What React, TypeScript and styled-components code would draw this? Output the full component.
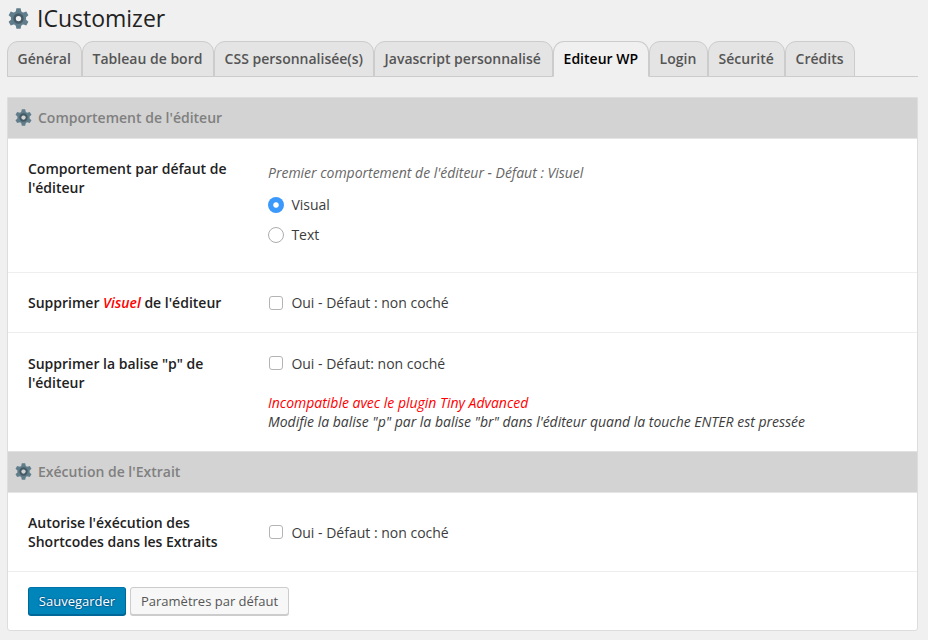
import React from "react";
import styled, { createGlobalStyle, css } from "styled-components";

const GlobalStyle = createGlobalStyle`
  *, *::before, *::after { box-sizing: border-box; }
  html, body { margin: 0; padding: 0; }
  body {
    background: #f0f0f0;
    color: #3c3c3c;
    font-family: "Open Sans", sans-serif;
    font-size: 14px;
    line-height: 19px;
    overflow: hidden;
  }
`;

const Page = styled.main`
  width: 928px;
  height: 640px;
  padding: 0 10px 0 7px;
  background: #f0f0f0;
`;

const Title = styled.h1`
  display: flex;
  align-items: center;
  gap: 8px;
  height: 41px;
  margin: 0;
  padding: 0 0 5px 1px;
  color: #222;
  font-size: 23px;
  font-weight: 400;
  line-height: 29px;
`;

const Tabs = styled.nav`
  display: flex;
  height: 36px;
  border-bottom: 1px solid #ccc;
`;

const Tab = styled.a<{ $width: number; $active?: boolean }>`
  width: ${(p) => p.$width}px;
  height: 36px;
  padding: 7px 0 0 9.6px;
  border: 1px solid #ccc;
  border-radius: 11px 11px 0 0;
  background: #e4e4e4;
  color: #555;
  font-size: 14px;
  font-weight: 600;
  line-height: 19px;
  white-space: nowrap;
  ${(p) =>
    p.$active &&
    css`
      border-bottom-color: #f0f0f0;
      background: #f0f0f0;
      color: #000;
    `}
`;

const Panel = styled.form`
  margin: 20px 0 0;
  border: 1px solid #ddd;
  border-radius: 0 0 3px 3px;
  background: #fff;
`;

const SectionHeader = styled.h2<{ $ruled?: boolean }>`
  display: flex;
  align-items: center;
  gap: 6px;
  height: ${(p) => (p.$ruled ? 42 : 41)}px;
  margin: 0;
  padding: 0 7px 1px;
  border-top: ${(p) => (p.$ruled ? "1px solid #e1e1e1" : "0")};
  border-bottom: 1px solid #e5e5e5;
  background: #d3d3d3;
  color: #808080;
  font-size: 14px;
  font-weight: 600;
  line-height: 19px;
`;

const Row = styled.section<{ $height: number; $top?: number; $ruled?: boolean }>`
  display: grid;
  grid-template-columns: 240px 1fr;
  height: ${(p) => p.$height}px;
  padding: ${(p) => p.$top ?? 20}px 20px 0;
  border-bottom: ${(p) => (p.$ruled ? "1px solid #eee" : "0")};
`;

const Label = styled.h3`
  margin: 0;
  color: #222;
  font-size: 14px;
  font-weight: 600;
  line-height: 19px;
`;

const Warning = styled.em`
  color: #f00;
`;

const Field = styled.div<{ $top?: number }>`
  padding-top: ${(p) => p.$top ?? 0}px;
`;

const Hint = styled.p`
  margin: 0 0 13px;
  color: #666;
  font-style: italic;
  letter-spacing: -0.012px;
`;

const Note = styled.p`
  margin: 20px 0 0;
  font-style: italic;
  letter-spacing: -0.012px;
`;

const Choice = styled.label`
  display: flex;
  align-items: center;
  height: 19px;
  & + & { margin-top: 11px; }
`;

const Radio = styled.input`
  appearance: none;
  width: 16px;
  height: 16px;
  margin: 0 7.4px 0 0;
  border: 1px solid #adadad;
  border-radius: 50%;
  background: #fff;
  &:checked {
    border: 0;
    background: radial-gradient(circle, #fff 2.3px, #3b99fc 3.2px);
  }
`;

const Checkbox = styled.input<{ $low?: boolean }>`
  appearance: none;
  width: 14px;
  height: 14px;
  margin: ${(p) => (p.$low ? "1px 8.4px 0 1px" : "0 8.4px 1px 1px")};
  border: 1px solid #b4b4b4;
  border-radius: 3px;
  background: #fff;
`;

const Footer = styled.footer`
  display: flex;
  gap: 4px;
  height: 58px;
  padding: 15px 20px 0;
`;

const Button = styled.button<{ $primary?: boolean }>`
  width: ${(p) => (p.$primary ? 98 : 159)}px;
  height: 28px;
  padding: 0;
  border: 1px solid #ccc;
  border-radius: 3px;
  background: #f7f7f7;
  box-shadow: 0 1px 0 #ccc;
  color: #555;
  font-family: inherit;
  font-size: 13px;
  line-height: 26px;
  white-space: nowrap;
  ${(p) =>
    p.$primary &&
    css`
      border-color: #0073aa #006799 #006799;
      background: #0085ba;
      box-shadow: 0 1px 0 #006799;
      color: #fff;
      text-shadow: 0 -1px 1px #006799, 1px 0 1px #006799, 0 1px 1px #006799, -1px 0 1px #006799;
    `}
`;

const GearSvg = styled.svg`
  flex: none;
  display: block;
`;

const TEETH = [0, 60, 120, 180, 240, 300];

function Gear({ size, hole }: { size: number; hole: string }) {
  return (
    <GearSvg width={size} height={size} viewBox="0 0 20 20" aria-hidden="true">
      <g fill="#607d8b">
        {TEETH.map((angle) => (
          <path key={angle} d="M8 .3h4l.8 4.2H7.2z" transform={`rotate(${angle} 10 10)`} />
        ))}
        <circle cx="10" cy="10" r="7.2" />
      </g>
      <circle cx="10" cy="10" r="3.7" fill="none" stroke="#455a64" strokeWidth="2.4" />
      <circle cx="10" cy="10" r="2.5" fill={hole} />
    </GearSvg>
  );
}

const TABS = [
  { name: "Général", width: 75 },
  { name: "Tableau de bord", width: 132 },
  { name: "CSS personnalisée(s)", width: 160 },
  { name: "Javascript personnalisé", width: 179 },
  { name: "Editeur WP", width: 96, active: true },
  { name: "Login", width: 59 },
  { name: "Sécurité", width: 77 },
  { name: "Crédits", width: 70 },
];

export default function App() {
  return (
    <>
      <GlobalStyle />
      <Page>
        <Title>
          <Gear size={21} hole="#f0f0f0" />
          ICustomizer
        </Title>
        <Tabs>
          {TABS.map((tab) => (
            <Tab key={tab.name} $width={tab.width} $active={tab.active}>
              {tab.name}
            </Tab>
          ))}
        </Tabs>
        <Panel>
          <SectionHeader>
            <Gear size={17} hole="#d3d3d3" />
            Comportement de l'éditeur
          </SectionHeader>
          <Row $height={134} $ruled>
            <Label>
              Comportement par défaut de
              <br />
              l'éditeur
            </Label>
            <Field $top={4}>
              <Hint>Premier comportement de l'éditeur - Défaut : Visuel</Hint>
              <Choice>
                <Radio type="radio" name="mode" defaultChecked />
                Visual
              </Choice>
              <Choice>
                <Radio type="radio" name="mode" />
                Text
              </Choice>
            </Field>
          </Row>
          <Row $height={60} $ruled>
            <Label>
              Supprimer <Warning>Visuel</Warning> de l'éditeur
            </Label>
            <Field>
              <Choice>
                <Checkbox type="checkbox" $low />
                Oui - Défaut : non coché
              </Choice>
            </Field>
          </Row>
          <Row $height={118} $top={21}>
            <Label>
              Supprimer la balise "p" de
              <br />
              l'éditeur
            </Label>
            <Field>
              <Choice>
                <Checkbox type="checkbox" />
                Oui - Défaut: non coché
              </Choice>
              <Note>
                <Warning>Incompatible avec le plugin Tiny Advanced</Warning>
                <br />
                Modifie la balise "p" par la balise "br" dans l'éditeur quand la touche ENTER est pressée
              </Note>
            </Field>
          </Row>
          <SectionHeader $ruled>
            <Gear size={17} hole="#d3d3d3" />
            Exécution de l'Extrait
          </SectionHeader>
          <Row $height={79} $ruled>
            <Label>
              Autorise l'éxécution des
              <br />
              Shortcodes dans les Extraits
            </Label>
            <Field $top={10}>
              <Choice>
                <Checkbox type="checkbox" />
                Oui - Défaut : non coché
              </Choice>
            </Field>
          </Row>
          <Footer>
            <Button type="button" $primary>
              Sauvegarder
            </Button>
            <Button type="button">Paramètres par défaut</Button>
          </Footer>
        </Panel>
      </Page>
    </>
  );
}
